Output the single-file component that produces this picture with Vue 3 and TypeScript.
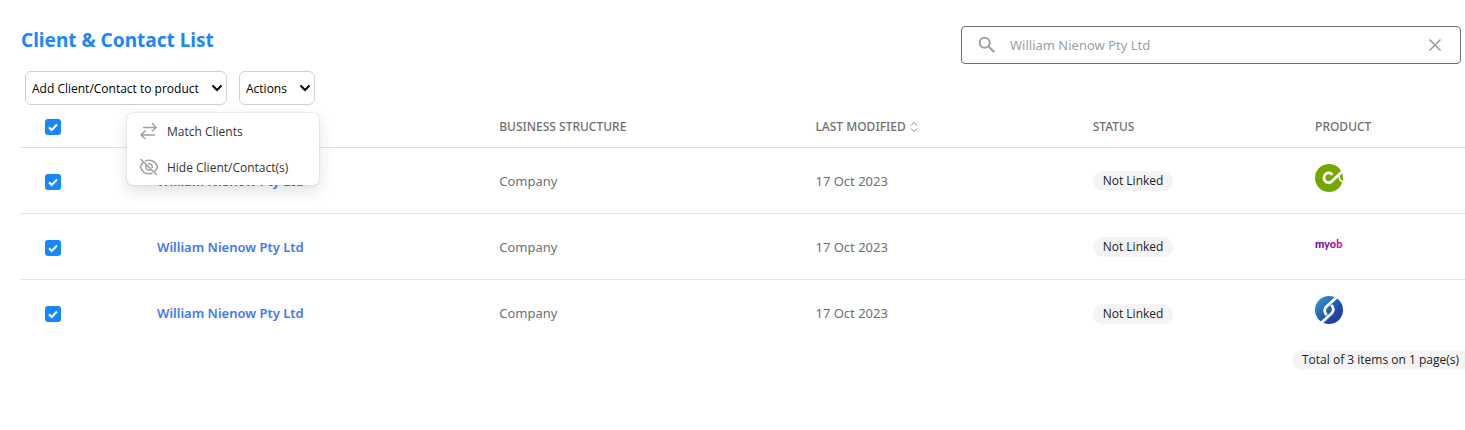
<script setup lang="ts">
import { ref, computed } from 'vue'

interface ClientRow {
  id: number
  name: string
  structure: string
  modified: string
  status: string
  product: 'connect' | 'myob' | 'sync'
  checked: boolean
}

const query = ref('William Nienow Pty Ltd')
const menuOpen = ref(true)
const rows = ref<ClientRow[]>([
  { id: 1, name: 'William Nienow Pty Ltd', structure: 'Company', modified: '17 Oct 2023', status: 'Not Linked', product: 'connect', checked: true },
  { id: 2, name: 'William Nienow Pty Ltd', structure: 'Company', modified: '17 Oct 2023', status: 'Not Linked', product: 'myob', checked: true },
  { id: 3, name: 'William Nienow Pty Ltd', structure: 'Company', modified: '17 Oct 2023', status: 'Not Linked', product: 'sync', checked: true },
])

const allChecked = computed({
  get: () => rows.value.every((r) => r.checked),
  set: (value: boolean) => rows.value.forEach((r) => (r.checked = value)),
})
</script>

<template>
  <main class="page">
    <header class="top">
      <h1 class="title">Client &amp; Contact List</h1>
      <div class="search">
        <svg class="search-icon" viewBox="0 0 18 18" aria-hidden="true">
          <circle cx="6.7" cy="6.7" r="5" />
          <path d="M10.5 10.5 16.3 16.3" />
        </svg>
        <input v-model="query" class="search-input" type="text" aria-label="Search clients" />
        <button class="clear" type="button" aria-label="Clear search" @click="query = ''">
          <svg viewBox="0 0 14 14" aria-hidden="true"><path d="M1.5 1.5l11 11M12.5 1.5l-11 11" /></svg>
        </button>
      </div>
    </header>

    <div class="toolbar">
      <div class="picker">
        <select class="control" aria-label="Add Client/Contact to product">
          <option>Add Client/Contact to product</option>
        </select>
        <svg class="chevron" viewBox="0 0 12 8" aria-hidden="true"><path d="M1.5 1.5 6 6l4.5-4.5" /></svg>
      </div>
      <div class="picker">
        <button class="control" type="button" aria-haspopup="menu" :aria-expanded="menuOpen" @click="menuOpen = !menuOpen">
          Actions
        </button>
        <svg class="chevron" viewBox="0 0 12 8" aria-hidden="true"><path d="M1.5 1.5 6 6l4.5-4.5" /></svg>
        <div v-if="menuOpen" class="menu" role="menu">
          <button class="menu-item" type="button" role="menuitem">
            <svg viewBox="0 0 20 20" aria-hidden="true">
              <path d="M4 6.500h13M13 2l4 4.500-4 4M16 14H2.500M6.500 9.500l-4.500 4.500 4.500 4" />
            </svg>
            Match Clients
          </button>
          <button class="menu-item" type="button" role="menuitem">
            <svg viewBox="0 0 20 20" aria-hidden="true">
              <path d="M1.500 2 18 18M6 4.200C7.200 3.500 8.500 3.200 10 3.200c4.500 0 7.300 3 8.500 6.800-.6 1.800-1.500 3.300-2.800 4.500M4 5.600C2.800 6.800 2 8.300 1.500 10c1.200 3.800 4 6.800 8.500 6.800 1.300 0 2.500-.3 3.600-.8M7.300 8.400a3.200 3.200 0 0 0 4.400 4.300M8.900 6.900a3.200 3.200 0 0 1 4.200 4" />
            </svg>
            Hide Client/Contact(s)
          </button>
        </div>
      </div>
    </div>

    <table class="clients">
      <colgroup>
        <col class="col-check" />
        <col class="col-name" />
        <col class="col-structure" />
        <col class="col-modified" />
        <col class="col-status" />
        <col />
      </colgroup>
      <thead>
        <tr>
          <th class="check-cell"><input v-model="allChecked" class="tick" type="checkbox" aria-label="Select all" /></th>
          <th aria-label="Name"></th>
          <th>BUSINESS STRUCTURE</th>
          <th>
            <button class="sort" type="button">
              LAST MODIFIED
              <svg viewBox="0 0 8 12" aria-hidden="true"><path d="M1 4.500 4 1.500l3 3M1 7.500l3 3 3-3" /></svg>
            </button>
          </th>
          <th>STATUS</th>
          <th>PRODUCT</th>
        </tr>
      </thead>
      <tbody>
        <tr v-for="row in rows" :key="row.id">
          <td class="check-cell">
            <input v-model="row.checked" class="tick" type="checkbox" :aria-label="`Select ${row.name}`" />
          </td>
          <td><a class="name" href="#">{{ row.name }}</a></td>
          <td>{{ row.structure }}</td>
          <td>{{ row.modified }}</td>
          <td><span class="badge">{{ row.status }}</span></td>
          <td>
            <svg v-if="row.product === 'connect'" class="logo" viewBox="0 0 28 28" role="img" aria-label="Product">
              <circle cx="14" cy="14" r="14" fill="#74a800" />
              <path d="M17.500 10.800C16.300 9.300 14.800 8.700 13.200 8.900A5 5 0 0 0 9 14c.1 3 2.400 4.800 4.900 4.700 1.500-.1 2.500-.8 3.500-1.900L29 6" fill="none" stroke="#fff" stroke-width="2.800" />
              <path d="M23.500 12c1.300 1 .8 3 1.800 4.500l3.200 2" fill="none" stroke="#fff" stroke-width="1.500" />
            </svg>
            <svg v-else-if="row.product === 'myob'" class="logo" viewBox="0 0 28 28" role="img" aria-label="myob">
              <defs>
                <linearGradient id="myob-fill" gradientUnits="userSpaceOnUse" x1="0" y1="0" x2="28" y2="0">
                  <stop offset="0" stop-color="#5b0fa8" />
                  <stop offset="0.5" stop-color="#8a0fa0" />
                  <stop offset="1" stop-color="#ee1579" />
                </linearGradient>
              </defs>
              <text class="myob" x="0" y="18" fill="url(#myob-fill)">myob</text>
            </svg>
            <svg v-else class="logo" viewBox="0 0 28 28" role="img" aria-label="Product">
              <defs>
                <linearGradient id="sync-fill" x1="0" y1="0" x2="1" y2="1">
                  <stop offset="0.15" stop-color="#2f8fcb" />
                  <stop offset="0.6" stop-color="#1f4fae" />
                  <stop offset="1" stop-color="#1b2f9c" />
                </linearGradient>
              </defs>
              <circle cx="14" cy="14" r="14" fill="url(#sync-fill)" />
              <path d="M22 1 11.500 10.500C9 13 9 16.500 11.800 19M6 27l10.500-9.500c2.500-2.500 2.500-6-.3-8.500" fill="none" stroke="#fff" stroke-width="2.800" />
            </svg>
          </td>
        </tr>
      </tbody>
    </table>

    <footer class="footer"><span class="total">Total of 3 items on 1 page(s)</span></footer>
  </main>
</template>

<style>
body {
  margin: 0;
  background: #fff;
}
</style>

<style scoped>
.page {
  padding: 26px 0 0 21px;
  font-family: "Segoe UI", "Noto Sans", "Open Sans", sans-serif;
  font-size: 13px;
  color: #707070;
}
.page * {
  box-sizing: border-box;
}
button,
input,
select {
  margin: 0;
  font-family: inherit;
}
.top {
  display: flex;
  justify-content: space-between;
  align-items: flex-start;
  padding-right: 4px;
}
.title {
  margin: 0;
  font-size: 19px;
  line-height: 28px;
  font-weight: 700;
  color: #1a86ff;
}
.search {
  display: flex;
  align-items: center;
  width: 500px;
  height: 38px;
  padding: 0 18px 0 16px;
  border: 1px solid #707070;
  border-radius: 4px;
}
.search-icon {
  width: 18px;
  height: 18px;
  fill: none;
  stroke: #a0a0a0;
  stroke-width: 2;
}
.search-input {
  flex: 1;
  min-width: 0;
  padding: 0 14px;
  border: 0;
  outline: 0;
  background: transparent;
  font-size: 13px;
  color: #a0a0a0;
}
.clear {
  display: flex;
  padding: 0;
  border: 0;
  background: none;
}
.clear svg {
  width: 14px;
  height: 14px;
  fill: none;
  stroke: #999;
  stroke-width: 1.5;
}
.toolbar {
  display: flex;
  gap: 12px;
  padding: 7px 4px 0;
}
.picker {
  position: relative;
}
.control {
  display: block;
  appearance: none;
  height: 34px;
  padding: 1px 27px 0 6px;
  border: 1px solid #d0d0d0;
  border-radius: 6px;
  background: #fff;
  font-family: "Segoe UI", "Open Sans", sans-serif;
  font-size: 12px;
  font-weight: 500;
  line-height: 18px;
  color: #000;
}
.chevron {
  position: absolute;
  top: 13px;
  right: 4px;
  width: 12px;
  height: 8px;
  fill: none;
  stroke: #000;
  stroke-width: 2;
  pointer-events: none;
}
.menu {
  position: absolute;
  top: 42px;
  right: -4px;
  width: 192px;
  border-radius: 6px;
  background: #fff;
  box-shadow: 0 0 2px rgba(0, 0, 0, 0.2), 0 6px 16px rgba(0, 0, 0, 0.12);
}
.menu-item {
  display: flex;
  align-items: center;
  gap: 8px;
  width: 100%;
  height: 36px;
  padding: 0 12px;
  border: 0;
  background: none;
  font-family: "Segoe UI", "Open Sans", sans-serif;
  font-size: 12px;
  color: #333;
}
.menu-item svg {
  width: 20px;
  height: 20px;
  fill: none;
  stroke: #a0a0a0;
  stroke-width: 1.5;
}
.clients {
  width: 100%;
  table-layout: fixed;
  border-collapse: collapse;
}
.col-check {
  width: 136px;
}
.col-name {
  width: 23.7%;
}
.col-structure {
  width: 21.9%;
}
.col-modified {
  width: 19.2%;
}
.col-status {
  width: 15.4%;
}
th,
td {
  padding: 2px 0 0;
  text-align: left;
  vertical-align: middle;
  border-bottom: 1px solid #e2e2e2;
}
th {
  height: 42px;
  font-size: 12px;
  font-weight: 500;
}
td {
  height: 66px;
}
tbody tr:last-child td {
  border-bottom: 0;
}
.check-cell {
  padding: 3px 0 0 24px;
}
.tick {
  display: block;
  appearance: none;
  width: 16px;
  height: 16px;
  border: 1px solid #b0b0b0;
  border-radius: 3px;
  background: #fff;
}
.tick:checked {
  border: 0;
  background: #1587ff url("data:image/svg+xml,%3Csvg xmlns='http://www.w3.org/2000/svg' viewBox='0 0 16 16'%3E%3Cpath d='M4 8.300l2.700 2.700L12 5.500' fill='none' stroke='white' stroke-width='2'/%3E%3C/svg%3E");
}
.sort {
  display: flex;
  align-items: center;
  gap: 4px;
  padding: 0;
  border: 0;
  background: none;
  font-size: 12px;
  font-weight: 500;
  color: inherit;
}
.sort svg {
  width: 8px;
  height: 12px;
  fill: none;
  stroke: #888;
  stroke-width: 1;
}
.name {
  color: #4379ee;
  font-weight: 600;
  text-decoration: none;
}
.badge,
.total {
  display: inline-block;
  height: 20px;
  padding: 0 10px;
  border-radius: 10px;
  background: #f4f4f4;
  font-family: "Segoe UI", "Open Sans", sans-serif;
  font-size: 12px;
  font-weight: 500;
  line-height: 20px;
  color: #222;
}
.badge {
  vertical-align: middle;
}
.logo {
  display: block;
  width: 28px;
  height: 28px;
  margin-bottom: 7px;
}
.myob {
  font-family: Lato, sans-serif;
  font-size: 11px;
  font-weight: 900;
}
.footer {
  display: flex;
  justify-content: flex-end;
  padding-top: 5px;
}
.total {
  padding-right: 6px;
  border-radius: 10px 0 0 10px;
}
</style>
